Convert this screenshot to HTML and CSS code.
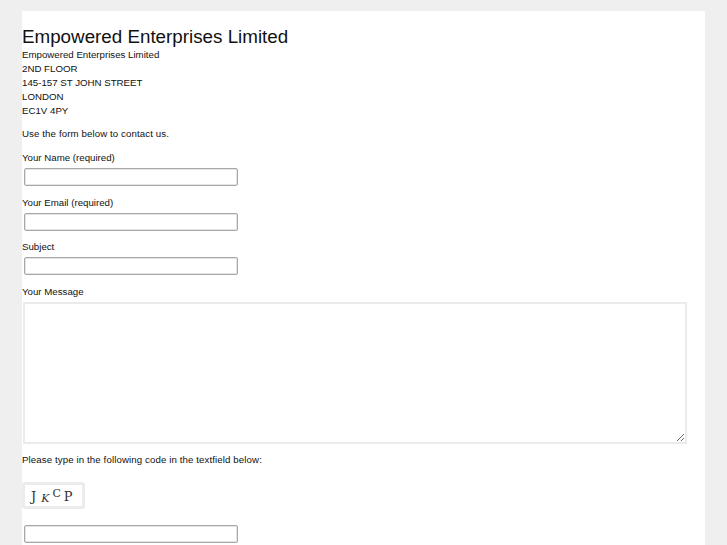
FILE: index.html
```html
<!DOCTYPE html>
<html>
<head>
<meta charset="utf-8">
<link rel="stylesheet" href="styles.css">
</head>
<body>
<div class="page">
  <h1 class="title">Empowered Enterprises Limited</h1>
  <p class="address">Empowered Enterprises Limited<br>2ND FLOOR<br>145-157 ST JOHN STREET<br>LONDON<br>EC1V 4PY</p>
  <p class="intro">Use the form below to contact us.</p>
  <form class="form">
    <div class="field">
      <label class="label">Your Name (required)</label>
      <input class="text" type="text">
    </div>
    <div class="field">
      <label class="label">Your Email (required)</label>
      <input class="text" type="text">
    </div>
    <div class="field">
      <label class="label">Subject</label>
      <input class="text" type="text">
    </div>
    <div class="field">
      <label class="label">Your Message</label>
      <textarea class="message"></textarea>
    </div>
    <p class="intro captcha-note">Please type in the following code in the textfield below:</p>
    <div class="captcha"><span class="c1">J</span><span class="c2">K</span><span class="c3">C</span><span class="c4">P</span></div>
    <input class="text code" type="text">
  </form>
</div>
</body>
</html>
```
FILE: styles.css
```css
html, body {
  margin: 0;
  padding: 0;
  background: #efefef;
}
body {
  font-family: "Liberation Sans", Arial, sans-serif;
  color: #111;
  font-size: 9.7px;
}
.page {
  margin: 11px 22px 0 22px;
  background: #fff;
  padding-top: 15px;
  min-height: 560px;
}
.title {
  font-size: 18.8px;
  font-weight: normal;
  line-height: 22px;
  margin: 0;
  color: #111;
}
.address {
  margin: 0;
  line-height: 14px;
}
.intro {
  margin: 9px 0 0 0;
  line-height: 14px;
  letter-spacing: 0.1px;
}
.form {
  margin: 0;
}
.field {
  margin-top: 10px;
  display: flex;
  flex-direction: column;
  align-items: flex-start;
}
.field + .field {
  margin-top: 9.5px;
}
.label {
  line-height: 14px;
  display: block;
}
.text {
  box-sizing: border-box;
  width: 214px;
  height: 18px;
  margin: 3px 0 0 2px;
  padding: 0 2px;
  border: 1px solid #a8a8a8;
  border-radius: 2px;
  box-shadow: inset 0 0 0 1px #e4e4e4;
  background: #fff;
  font-size: 11px;
}
.message {
  box-sizing: border-box;
  width: 664px;
  height: 142px;
  margin: 3px 0 0 1px;
  border: 2px solid #ebebeb;
  border-radius: 0;
  background: #fff;
  resize: both;
  font-size: 11px;
}
.captcha-note {
  margin-top: 9px;
}
.captcha {
  box-sizing: border-box;
  width: 63px;
  height: 27px;
  margin-top: 15px;
  border: 3px solid #ececec;
  border-radius: 3px;
  background: #fff;
  display: flex;
  align-items: center;
  padding-left: 6px;
  font-family: "DejaVu Serif", "Liberation Serif", serif;
  color: #333;
  gap: 3px;
}
.c1 { font-size: 13px; position: relative; top: 1px; }
.c2 { font-size: 11px; font-style: italic; position: relative; top: 3px; margin-left: 2px; }
.c3 { font-size: 11px; position: relative; top: -2px; }
.c4 { font-size: 13px; position: relative; top: 1px; }
.code {
  display: block;
  margin-top: 16px;
}
```
